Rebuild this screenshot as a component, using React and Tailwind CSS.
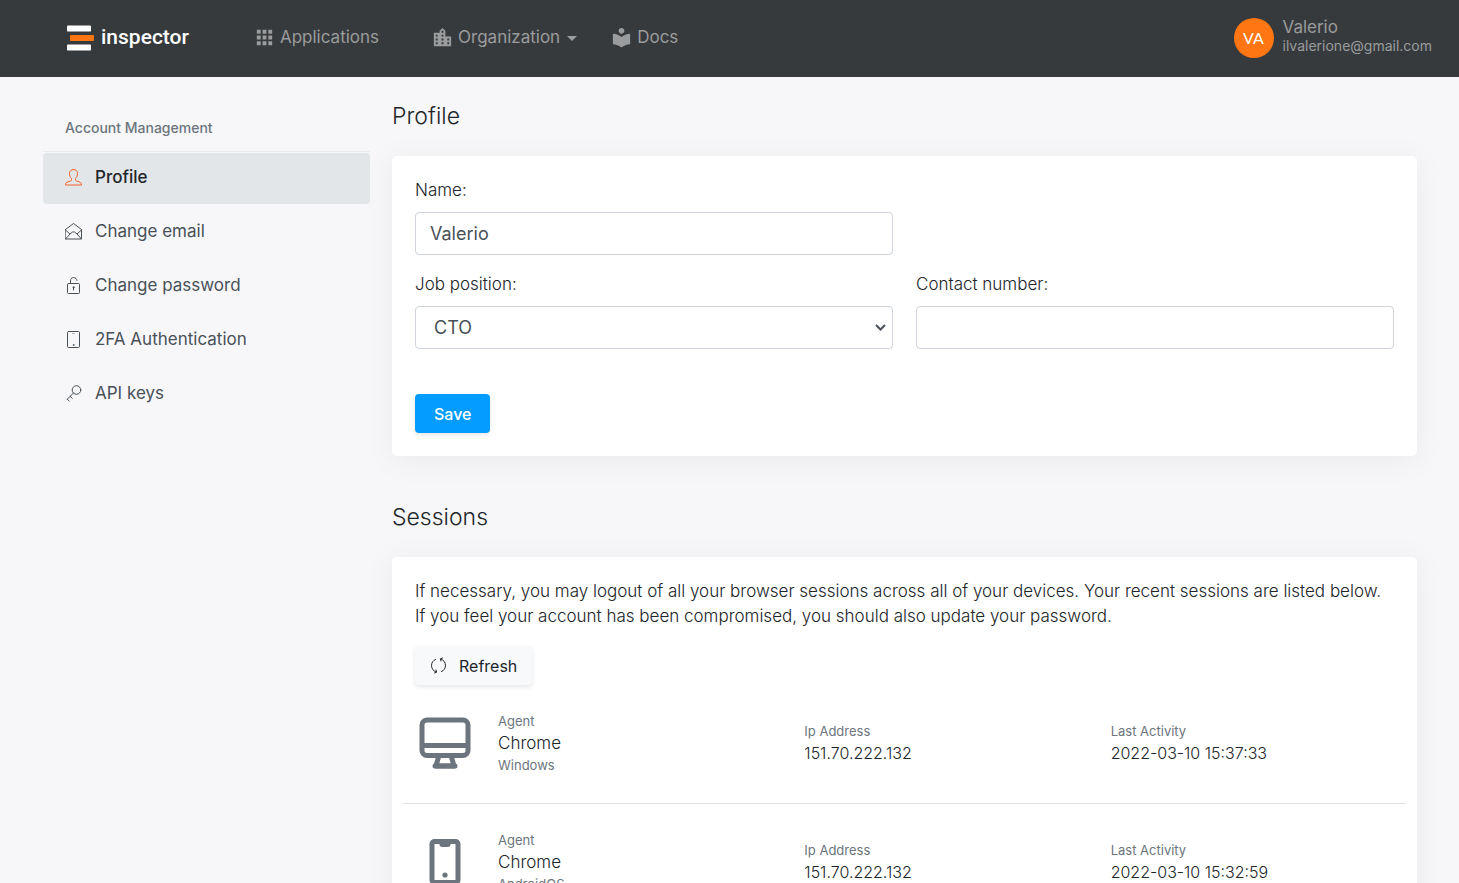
import { MdApps, MdLocationCity, MdLocalLibrary, MdArrowDropDown } from 'react-icons/md';

const menu = [
  { label: 'Profile', icon: UserIcon, active: true },
  { label: 'Change email', icon: MailIcon },
  { label: 'Change password', icon: LockIcon },
  { label: '2FA Authentication', icon: TabletIcon },
  { label: 'API keys', icon: KeyIcon },
];

const sessions = [
  { icon: DesktopIcon, agent: 'Chrome', os: 'Windows', ip: '151.70.222.132', last: '2022-03-10 15:37:33' },
  { icon: PhoneIcon, agent: 'Chrome', os: 'AndroidOS', ip: '151.70.222.132', last: '2022-03-10 15:32:59' },
];

function LineIcon({ children }) {
  return (
    <svg
      className="size-[17px] shrink-0"
      viewBox="0 0 17 17"
      fill="none"
      stroke="currentColor"
      strokeLinecap="round"
      strokeLinejoin="round"
      aria-hidden="true"
    >
      {children}
    </svg>
  );
}

function UserIcon() {
  return (
    <LineIcon>
      <path d="M8.500.5C6 .5 4.500 2 4.500 4.500c0 2.200.8 4 2 5v1.300c0 .7-.4 1-1 1.200l-3.500 1.200c-1 .4-1.500 1.300-1.500 2.800h16c0-1.500-.5-2.400-1.500-2.800l-3.500-1.200c-.6-.2-1-.5-1-1.200V9.500c1.200-1 2-2.800 2-5C12.500 2 11 .5 8.500.5z" />
    </LineIcon>
  );
}

function MailIcon() {
  return (
    <LineIcon>
      <path d="M.5 6.500 8.500.5l8 6v9.500H.5z" />
      <path d="M.5 7l4.500 4L.500 16M16.500 7 12 11l4.500 5M5 11l2.500-2h2L12 11" />
    </LineIcon>
  );
}

function LockIcon() {
  return (
    <LineIcon>
      <rect x="2.500" y="6.500" width="12" height="10" rx="1" />
      <path d="M5.500 6.500V4c0-2 1.200-3.500 3-3.500s3.500 1.300 3.500 3" />
      <path d="M8.500 10.500V13" />
      <circle cx="8.500" cy="10.300" r=".6" />
    </LineIcon>
  );
}

function TabletIcon() {
  return (
    <LineIcon>
      <rect x="2.500" y=".5" width="12" height="16" rx="1" />
      <path d="M7.500 2.500h2" opacity=".4" />
      <circle cx="8.500" cy="14" r=".4" />
    </LineIcon>
  );
}

function KeyIcon() {
  return (
    <LineIcon>
      <circle cx="11.500" cy="5" r="4.300" />
      <path d="M8.500 8 2.300 14.200M5.200 11.500l2 1.800M2.300 14.200l2 2" />
    </LineIcon>
  );
}

function RefreshIcon() {
  return (
    <LineIcon>
      <path d="M5.500 2.500C3 3.500 1.500 5.700 1.500 8.500c0 3 1.800 5.500 4.500 6.500M4.500 16l2-.8L6 13" />
      <path d="M11.500 14.500c2.500-1 4-3.200 4-6 0-3-1.800-5.500-4.500-6.500M12.500 1l-2 .8.500 2.200" />
    </LineIcon>
  );
}

function DesktopIcon() {
  return (
    <svg className="size-[52px]" viewBox="0 0 52 52" fill="none" stroke="currentColor" strokeWidth="5" aria-hidden="true">
      <rect x="3" y="3" width="46" height="35.500" rx="5" />
      <path d="M3 28.500h46" />
      <path d="M19.500 40l-2.500 9h18l-2.500-9" strokeLinejoin="round" />
      <path d="M16 49h20" strokeLinecap="round" />
    </svg>
  );
}

function PhoneIcon() {
  return (
    <svg className="size-[52px]" viewBox="0 0 52 52" fill="none" stroke="currentColor" strokeWidth="5" aria-hidden="true">
      <rect x="13" y="5.500" width="26" height="41" rx="2.500" />
      <path d="M20.500 7h11v1.500c0 1.500-1 2.500-2.500 2.500h-6c-1.500 0-2.500-1-2.500-2.500z" fill="currentColor" stroke="none" />
      <circle cx="26" cy="39" r="2.600" fill="currentColor" stroke="none" />
    </svg>
  );
}

function Logo() {
  return (
    <a href="#" className="flex items-center gap-[7px] font-[Roboto] text-[21px] font-medium text-white">
      <svg className="h-[26px] w-[27px]" viewBox="0 0 27 26" aria-hidden="true">
        <rect x="0" y=".5" width="24" height="6" rx=".8" fill="#fff" />
        <rect x="3" y="10" width="24" height="6" rx=".8" fill="#f97613" />
        <rect x="0" y="19.500" width="24" height="6" rx=".8" fill="#fff" />
      </svg>
      inspector
    </a>
  );
}

function Header() {
  return (
    <header className="flex h-[77px] items-center bg-[#373a3c] pr-[27px] pb-0.5 pl-[67px] text-[17px] font-normal text-[#9b9c9d]">
      <Logo />
      <nav className="ml-16 flex items-center">
        <a href="#" className="mr-[52px] flex items-center gap-1">
          <MdApps className="size-[23px]" />
          Applications
        </a>
        <button type="button" className="mr-[26px] flex items-center gap-1">
          <MdLocationCity className="size-[23px]" />
          <span className="flex items-center">
            Organization
            <MdArrowDropDown className="size-6" />
          </span>
        </button>
        <a href="#" className="flex items-center gap-1">
          <MdLocalLibrary className="size-[23px]" />
          Docs
        </a>
      </nav>
      <a href="#" className="ml-auto flex items-center gap-[9px]">
        <span className="flex size-10 items-center justify-center rounded-full bg-[#ff7613] font-[Lato] text-base text-white">VA</span>
        <span className="flex flex-col pb-1">
          <span className="leading-5">Valerio</span>
          <span className="text-sm leading-[18px]">ilvalerione@gmail.com</span>
        </span>
      </a>
    </header>
  );
}

function Sidebar() {
  return (
    <aside className="pt-[43px]">
      <h2 className="border-b border-[#e9ebed] px-[22px] pb-[15px] text-sm leading-4 font-medium text-[#6c757d]">
        Account Management
      </h2>
      <nav className="flex flex-col gap-[3px] pt-px">
        {menu.map(({ label, icon: Icon, active }) => (
          <a
            key={label}
            href="#"
            className={
              active
                ? 'flex h-[51px] items-center gap-[13px] rounded bg-[#e2e6e9] px-[22px] pb-0.5 font-medium text-[#212529]'
                : 'flex h-[51px] items-center gap-[13px] rounded px-[22px] pb-0.5 font-normal text-[#495057]'
            }
          >
            <span className={active ? 'text-[#f4642c]' : ''}>
              <Icon />
            </span>
            {label}
          </a>
        ))}
      </nav>
    </aside>
  );
}

function Card({ title, children }) {
  return (
    <section>
      <h1 className="mb-[26px] text-[23px] leading-7">{title}</h1>
      <div className="rounded-[5px] bg-white px-[23px] pt-[22px] pb-[23px] shadow-[0_4px_32px_rgba(0,0,0,0.06)]">{children}</div>
    </section>
  );
}

const fieldClass = 'h-[43px] w-full rounded border border-[#ced4da] bg-white px-[14px] text-lg font-normal text-[#495057]';

function Field({ id, label, children }) {
  return (
    <div>
      <label htmlFor={id} className="mb-[9px] block leading-[25px]">
        {label}
      </label>
      {children}
    </div>
  );
}

function ProfileForm() {
  return (
    <form onSubmit={(e) => e.preventDefault()}>
      <div className="grid grid-cols-2 gap-x-[23px] gap-y-[17px]">
        <Field id="name" label="Name:">
          <input id="name" type="text" defaultValue="Valerio" className={fieldClass} />
        </Field>
        <div />
        <Field id="job" label="Job position:">
          <div className="relative">
            <select id="job" defaultValue="CTO" className={`${fieldClass} appearance-none pl-[18px]`}>
              <option>CTO</option>
              <option>CEO</option>
              <option>Developer</option>
            </select>
            <svg
              className="pointer-events-none absolute top-[18px] right-[7px] h-[7px] w-[11px] text-[#495057]"
              viewBox="0 0 11 7"
              fill="none"
              stroke="currentColor"
              strokeWidth="2"
              aria-hidden="true"
            >
              <path d="M1 1l4.500 4.500L10 1" />
            </svg>
          </div>
        </Field>
        <Field id="phone" label="Contact number:">
          <input id="phone" type="tel" className={fieldClass} />
        </Field>
      </div>
      <button
        type="submit"
        className="mt-[45px] block h-[39px] rounded bg-[#049dff] px-[19px] text-base font-medium text-white shadow-[0_2px_5px_rgba(0,0,0,0.1)]"
      >
        Save
      </button>
    </form>
  );
}

function Session({ icon: Icon, agent, os, ip, last }) {
  return (
    <li className="grid grid-cols-[84px_repeat(3,1fr)] items-center border-b border-[#dee2e6] pt-[25px] pb-[27px] leading-[22px] last:border-b-0">
      <div className="flex justify-center text-[#6c757d]">
        <Icon />
      </div>
      <div className="flex flex-col px-[11px]">
        <span className="text-[13px] font-normal text-[#6c757d]">Agent</span>
        <span>{agent}</span>
        <span className="text-[13px] font-normal text-[#6c757d]">{os}</span>
      </div>
      <div className="flex flex-col px-[11px] pb-0.5">
        <span className="text-[13px] font-normal text-[#6c757d]">Ip Address</span>
        <span className="text-base leading-[22px]">{ip}</span>
      </div>
      <div className="flex flex-col px-[11px] pb-0.5">
        <span className="text-[13px] font-normal text-[#6c757d]">Last Activity</span>
        <span className="text-base leading-[22px]">{last}</span>
      </div>
    </li>
  );
}

function App() {
  return (
    <div className="min-h-screen bg-[#f7f7fa] font-[Inter,sans-serif] text-[17px] font-light text-[#212529]">
      <Header />
      <div className="grid grid-cols-4 gap-[22px] pr-[42px] pl-[43px]">
        <Sidebar />
        <main className="col-span-3 flex flex-col gap-[47px] pt-[25px] pb-12">
          <Card title="Profile">
            <ProfileForm />
          </Card>
          <Card title="Sessions">
            <p className="mb-[17px] leading-[25px]">
              If necessary, you may logout of all your browser sessions across all of your devices. Your recent sessions are listed
              below. <br />
              If you feel your account has been compromised, you should also update your password.
            </p>
            <button
              type="button"
              className="flex h-[39px] items-center gap-3 rounded bg-[#f8f9fb] px-[15px] text-base font-normal shadow-[0_2px_5px_rgba(0,0,0,0.1)]"
            >
              <RefreshIcon />
              Refresh
            </button>
            <ul className="-mx-3">
              {sessions.map((session) => (
                <Session key={session.last} {...session} />
              ))}
            </ul>
          </Card>
        </main>
      </div>
    </div>
  );
}

export default App;
